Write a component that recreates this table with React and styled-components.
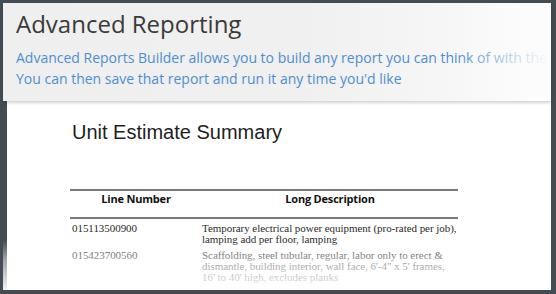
import { Fragment } from "react";
import styled, { createGlobalStyle } from "styled-components";

const Global = createGlobalStyle`
  html, body { margin: 0; padding: 0; background: #434d53; }
  #root { width: 556px; height: 294px; }
`;

const Frame = styled.div`
  width: 556px;
  height: 294px;
  box-sizing: border-box;
  background: #434d53;
  padding: 3px 5px 4px 3px;
  display: flex;
  flex-direction: column;
  overflow: hidden;
`;

const Banner = styled.div`
  position: relative;
  z-index: 2;
  height: 98px;
  box-sizing: border-box;
  padding: 4px 0 0 13px;
  background: linear-gradient(to right, #efefef 0%, #f0f0f0 55%, #fbfbfb 100%);
  box-shadow: 0 2px 3px rgba(0, 0, 0, 0.18);
  overflow: hidden;
  white-space: nowrap;
  &::after {
    content: "";
    position: absolute;
    top: 0;
    right: 0;
    bottom: 0;
    width: 95px;
    background: linear-gradient(to right, rgba(250, 250, 250, 0) 0%, rgba(252, 252, 252, 0.65) 60%, #fcfcfc 100%);
  }
`;

const Heading = styled.h1`
  margin: 0;
  font-family: "Open Sans", sans-serif;
  font-weight: 400;
  font-size: 24px;
  line-height: 34px;
  color: #3a3a3a;
`;

const Blurb = styled.p`
  margin: 6px 0 0;
  font-family: "Open Sans", sans-serif;
  font-size: 14px;
  line-height: 21px;
  color: #4b8fd2;
`;

const Sheet = styled.div`
  position: relative;
  flex: 1;
  background: linear-gradient(to right, #434d53 4px, #ffffff 4px);
  padding: 19px 0 0 69px;
  overflow: hidden;
  &::after {
    content: "";
    position: absolute;
    left: 0;
    right: 0;
    bottom: 0;
    height: 50px;
    background: linear-gradient(to bottom, rgba(255, 255, 255, 0) 0%, rgba(255, 255, 255, 0.5) 40%, rgba(255, 255, 255, 0.93) 100%);
  }
`;

const Title = styled.h2`
  margin: 0;
  font-family: "Liberation Sans", Arial, sans-serif;
  font-weight: 400;
  font-size: 20px;
  line-height: 24px;
  color: #1e1e1e;
`;

const Table = styled.div`
  margin-top: 45px;
  width: 388px;
  margin-left: -2px;
  display: grid;
  grid-template-columns: 132px 1fr;
`;

const HeadRow = styled.div`
  grid-column: 1 / -1;
  display: grid;
  grid-template-columns: 132px 1fr;
  border-top: 2px solid #7a7a7a;
  border-bottom: 2px solid #7a7a7a;
  padding: 0 0 10px;
`;

const HeadCell = styled.div`
  text-align: center;
  font-family: "Open Sans", sans-serif;
  font-weight: 700;
  font-size: 11px;
  line-height: 16px;
  letter-spacing: -0.2px;
  color: #111;
`;

const Cell = styled.div`
  padding: ${(p) => (p.$first ? "4px" : "5px")} 0 0 ${(p) => p.$indent || 0}px;
  font-family: "Liberation Serif", "Times New Roman", serif;
  font-size: 11px;
  line-height: 11px;
  letter-spacing: -0.05px;
  white-space: nowrap;
  color: #2a2a2a;
`;

const rows = [
  {
    num: "015113500900",
    desc: ["Temporary electrical power equipment (pro-rated per job),", "lamping add per floor, lamping"],
  },
  {
    num: "015423700560",
    desc: [
      "Scaffolding, steel tubular, regular, labor only to erect &",
      "dismantle, building interior, wall face, 6'-4\" x 5' frames,",
      "16' to 40' high, excludes planks",
    ],
  },
];

export default function App() {
  return (
    <>
      <Global />
      <Frame>
        <Banner>
          <Heading>Advanced Reporting</Heading>
          <Blurb>
            Advanced Reports Builder allows you to build any report you can think of with the
            <br />
            You can then save that report and run it any time you'd like
          </Blurb>
        </Banner>
        <Sheet>
          <Title>Unit Estimate Summary</Title>
          <Table>
            <HeadRow>
              <HeadCell>Line Number</HeadCell>
              <HeadCell>Long Description</HeadCell>
            </HeadRow>
            {rows.map((r, i) => (
              <Fragment key={r.num}>
                <Cell $indent={2} $first={i === 0}>{r.num}</Cell>
                <Cell $first={i === 0}>
                  {r.desc.map((line) => (
                    <div key={line}>{line}</div>
                  ))}
                </Cell>
              </Fragment>
            ))}
          </Table>
        </Sheet>
      </Frame>
    </>
  );
}
